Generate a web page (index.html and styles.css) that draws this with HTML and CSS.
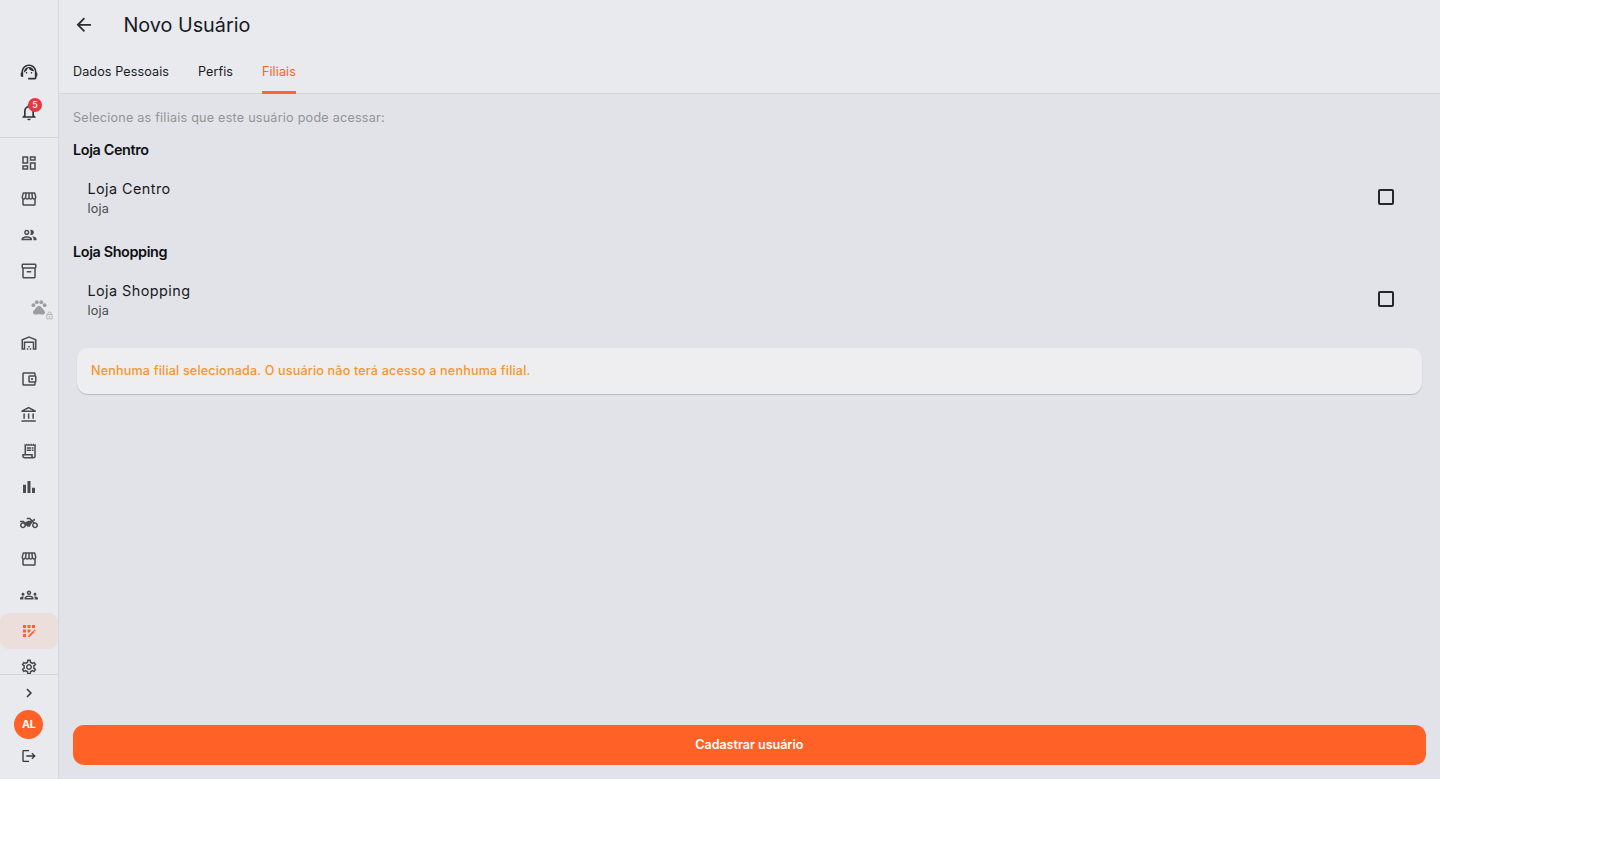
FILE: index.html
```html
<!DOCTYPE html>
<html lang="pt-BR">
<head>
    <meta charset="UTF-8">
    <meta name="viewport" content="width=device-width, initial-scale=1.0">
    <title>Novo Usuário</title>
    <link rel="stylesheet" href="styles.css">
</head>
<body>
    <div class="app">
        <aside class="sidebar">
            <div class="sidebar-top">
                <a class="top-item"><svg viewBox="0 0 24 24"><path d="M21 12.22C21 6.73 16.74 3 12 3c-4.69 0-9 3.65-9 9.28-.6.34-1 .98-1 1.72v2c0 1.1.9 2 2 2h1v-6.1c0-3.87 3.13-7 7-7s7 3.13 7 7V19h-8v2h8c1.1 0 2-.9 2-2v-1.22c.59-.31 1-.92 1-1.64v-2.3c0-.7-.41-1.31-1-1.62z"/><circle cx="9" cy="13" r="1"/><circle cx="15" cy="13" r="1"/><path d="M18 11.03C17.52 8.18 15.04 6 12.05 6c-3.03 0-6.29 2.51-6.03 6.45 2.47-1.01 4.33-3.21 4.86-5.89 1.31 2.63 4 4.44 7.12 4.47z"/></svg></a>
                <a class="top-item">
                    <svg viewBox="0 0 24 24"><path d="M12 22c1.1 0 2-.9 2-2h-4c0 1.1.9 2 2 2zm6-6v-5c0-3.07-1.63-5.64-4.5-6.32V4c0-.83-.67-1.5-1.5-1.5s-1.5.67-1.5 1.5v.68C7.64 5.36 6 7.92 6 11v5l-2 2v1h16v-1l-2-2zm-2 1H8v-6c0-2.48 1.51-4.5 4-4.5s4 2.02 4 4.5v6z"/></svg>
                    <span class="badge">5</span>
                </a>
            </div>

            <nav class="menu">
                <!-- Dashboard -->
                <a class="menu-item"><svg viewBox="0 0 24 24"><path d="M19 5v2h-4V5h4M9 5v6H5V5h4m10 8v6h-4v-6h4M9 17v2H5v-2h4M21 3h-8v6h8V3zM11 3H3v10h8V3zm10 8h-8v10h8V11zm-10 4H3v6h8v-6z"/></svg></a>
                <!-- Loja -->
                <a class="menu-item"><svg viewBox="0 0 24 24"><path id="storefront" d="M21.9 8.89l-1.05-4.37c-.22-.9-1-1.52-1.91-1.52H5.05c-.9 0-1.69.63-1.9 1.52L2.1 8.89c-.24 1.02-.02 2.06.62 2.88.08.11.19.19.28.29V19c0 1.1.9 2 2 2h14c1.1 0 2-.9 2-2v-6.94c.09-.09.2-.18.28-.28.64-.82.87-1.87.62-2.89zm-2.99-3.9l1.05 4.37c.1.42.01.84-.25 1.17-.14.18-.44.47-.94.47-.61 0-1.14-.49-1.21-1.14L16.98 5l1.93-.01zM13 5h1.96l.54 4.52c.05.39-.07.78-.33 1.07-.22.26-.54.41-.95.41-.67 0-1.22-.59-1.22-1.31V5zM8.49 9.52L9.04 5H11v4.69c0 .72-.55 1.31-1.29 1.31-.34 0-.65-.15-.89-.41-.25-.29-.37-.68-.33-1.07zm-4.45-.16L5.05 5h1.97l-.58 4.86c-.08.65-.6 1.14-1.21 1.14-.49 0-.8-.29-.93-.47-.27-.32-.36-.75-.26-1.17zM5 19v-6.03c.08.01.15.03.23.03.87 0 1.66-.36 2.24-.95.6.6 1.4.95 2.31.95.87 0 1.65-.36 2.23-.93.59.57 1.39.93 2.29.93.84 0 1.64-.35 2.24-.95.58.59 1.37.95 2.24.95.08 0 .15-.02.23-.03V19H5z"/></svg></a>
                <!-- Clientes -->
                <a class="menu-item"><svg viewBox="0 0 24 24"><path d="M9 13.75c-2.34 0-7 1.17-7 3.5V19h14v-1.75c0-2.33-4.66-3.5-7-3.5zM4.34 17c.84-.58 2.87-1.25 4.66-1.25s3.82.67 4.66 1.25H4.34zM9 12c1.93 0 3.5-1.57 3.5-3.5S10.93 5 9 5 5.5 6.57 5.5 8.5 7.07 12 9 12zm0-5c.83 0 1.5.67 1.5 1.5S9.83 10 9 10s-1.5-.67-1.5-1.5S8.17 7 9 7zm7.04 6.81c1.16.84 1.96 1.96 1.96 3.44V19h4v-1.75c0-2.02-3.5-3.17-5.96-3.44zM15 12c1.93 0 3.5-1.57 3.5-3.5S16.93 5 15 5c-.54 0-1.04.13-1.5.35.63.89 1 1.98 1 3.15s-.37 2.26-1 3.15c.46.22.96.35 1.5.35z"/></svg></a>
                <!-- Produtos -->
                <a class="menu-item"><svg viewBox="0 0 24 24"><path d="M20 2H4c-1 0-2 .9-2 2v3.01c0 .72.43 1.34 1 1.69V20c0 1.1 1.1 2 2 2h14c.9 0 2-.9 2-2V8.7c.57-.35 1-.97 1-1.69V4c0-1.1-1-2-2-2zm-1 18H5V9h14v11zm1-13H4V4h16v3z"/><path d="M9 12h6v2H9z"/></svg></a>
                <!-- Pets (bloqueado) -->
                <a class="menu-item locked">
                    <svg viewBox="0 0 24 24"><circle cx="4.5" cy="9.5" r="2.5"/><circle cx="9" cy="5.5" r="2.5"/><circle cx="15" cy="5.5" r="2.5"/><circle cx="19.5" cy="9.5" r="2.5"/><path d="M17.34 14.86c-.87-1.02-1.6-1.89-2.48-2.91-.46-.54-1.05-1.08-1.75-1.32-.11-.04-.22-.07-.33-.09-.25-.04-.52-.04-.78-.04s-.53 0-.79.05c-.11.02-.22.05-.33.09-.7.24-1.28.78-1.75 1.32-.87 1.02-1.6 1.89-2.48 2.91-1.31 1.31-2.92 2.76-2.62 4.79.29 1.02 1.02 2.03 2.33 2.32.73.15 3.06-.44 5.54-.44h.18c2.48 0 4.81.58 5.54.44 1.31-.29 2.04-1.31 2.33-2.32.31-2.04-1.3-3.49-2.61-4.8z"/></svg>
                    <svg class="lock" viewBox="0 0 24 24"><path d="M18 8h-1V6c0-2.76-2.24-5-5-5S7 3.24 7 6v2H6c-1.1 0-2 .9-2 2v10c0 1.1.9 2 2 2h12c1.1 0 2-.9 2-2V10c0-1.1-.9-2-2-2zM9 6c0-1.66 1.34-3 3-3s3 1.34 3 3v2H9V6zm9 14H6V10h12v10zm-6-3c1.1 0 2-.9 2-2s-.9-2-2-2-2 .9-2 2 .9 2 2 2z"/></svg>
                </a>
                <!-- Estoque -->
                <a class="menu-item"><svg viewBox="0 0 24 24"><path fill-rule="evenodd" d="M22 7v14h-5v-9H7v9H2V7l10-4 10 4zM4 19h1v-9h14v9h1V8.35l-8-3.2-8 3.2z"/><path d="M9 19h2v2H9zM11 16h2v2h-2zM13 19h2v2h-2z"/></svg></a>
                <!-- Caixa -->
                <a class="menu-item"><svg viewBox="0 0 24 24"><path d="M21 7.28V5c0-1.1-.9-2-2-2H5c-1.11 0-2 .9-2 2v14c0 1.1.89 2 2 2h14c1.1 0 2-.9 2-2v-2.28c.59-.35 1-.98 1-1.72V9c0-.74-.41-1.37-1-1.72zM20 9v6h-7V9h7zM5 19V5h14v2h-6c-1.1 0-2 .9-2 2v6c0 1.1.9 2 2 2h6v2H5z"/><circle cx="16" cy="12" r="1.5"/></svg></a>
                <!-- Financeiro -->
                <a class="menu-item"><svg viewBox="0 0 24 24"><path d="M6.5 10h-2v7h2v-7zm6 0h-2v7h2v-7zm8.5 9H2v2h19v-2zm-2.5-9h-2v7h2v-7zm-7-6.74L16.71 6H6.29l5.21-2.74m0-2.26L2 6v2h19V6l-9.5-5z"/></svg></a>
                <!-- Notas -->
                <a class="menu-item"><svg viewBox="0 0 24 24"><path d="M19.5 3.5L18 2l-1.5 1.5L15 2l-1.5 1.5L12 2l-1.5 1.5L9 2 7.5 3.5 6 2v14H3v3c0 1.66 1.34 3 3 3h12c1.66 0 3-1.34 3-3V2l-1.5 1.5zM15 20H6c-.55 0-1-.45-1-1v-1h10v2zm4-1c0 .55-.45 1-1 1s-1-.45-1-1v-3H8V5h11v14z"/><path d="M9 7h6v2H9zM16 7h2v2h-2zM9 10h6v2H9zM16 10h2v2h-2z"/></svg></a>
                <!-- Relatórios -->
                <a class="menu-item"><svg viewBox="0 0 24 24"><path d="M4 9h4v11H4zm12 4h4v7h-4zm-6-9h4v16h-4z"/></svg></a>
                <!-- Entregas -->
                <a class="menu-item"><svg viewBox="0 0 24 24"><path d="M20 11c-.18 0-.36.03-.53.05L17.41 9H20V6l-3.72 1.86L13.41 5H9v2h3.59l2 2H11l-4 2-2-2H0v2h4c-2.21 0-4 1.79-4 4s1.79 4 4 4 4-1.79 4-4l2 2h3l3.49-6.1 1.01 1.01C16.59 12.64 16 13.75 16 15c0 2.21 1.79 4 4 4s4-1.79 4-4-1.79-4-4-4zM4 17c-1.1 0-2-.9-2-2s.9-2 2-2 2 .9 2 2-.9 2-2 2zm16 0c-1.1 0-2-.9-2-2s.9-2 2-2 2 .9 2 2-.9 2-2 2z"/></svg></a>
                <!-- Filiais -->
                <a class="menu-item"><svg viewBox="0 0 24 24"><use href="#storefront"/></svg></a>
                <!-- Equipe -->
                <a class="menu-item"><svg viewBox="0 0 24 24"><path d="M4 13c1.1 0 2-.9 2-2s-.9-2-2-2-2 .9-2 2 .9 2 2 2zm1.13 1.1C4.76 14.04 4.39 14 4 14c-.99 0-1.93.21-2.78.58C.48 14.9 0 15.62 0 16.43V18h4.5v-1.61c0-.83.23-1.61.63-2.29zM20 13c1.1 0 2-.9 2-2s-.9-2-2-2-2 .9-2 2 .9 2 2 2zm4 3.43c0-.81-.48-1.53-1.22-1.85-.85-.37-1.79-.58-2.78-.58-.39 0-.76.04-1.13.1.4.68.63 1.46.63 2.29V18H24v-1.57zM16.24 13.65c-1.17-.52-2.61-.9-4.24-.9s-3.07.39-4.24.9C6.68 14.13 6 15.21 6 16.39V18h12v-1.61c0-1.18-.68-2.26-1.76-2.74zM8.07 16c.09-.23.13-.39.91-.69.97-.38 1.99-.56 3.02-.56s2.05.18 3.02.56c.77.3.81.46.91.69H8.07zM12 8c.55 0 1 .45 1 1s-.45 1-1 1-1-.45-1-1 .45-1 1-1m0-2c-1.66 0-3 1.34-3 3s1.34 3 3 3 3-1.34 3-3-1.34-3-3-3z"/></svg></a>
                <!-- Cadastros -->
                <a class="menu-item active"><svg viewBox="0 0 24 24"><path d="M10 4h4v4h-4zM4 16h4v4H4zM4 10h4v4H4zM4 4h4v4H4zM14 12.42V10h-4v4h2.42zM20.88 11.29l-1.17-1.17c-.16-.16-.42-.16-.58 0l-.88.88L20 12.75l.88-.88c.16-.16.16-.42 0-.58zM11 18.25V20h1.75l6.67-6.67-1.75-1.75zM16 4h4v4h-4z"/></svg></a>
                <!-- Configurações -->
                <a class="menu-item"><svg viewBox="0 0 24 24"><path d="M19.43 12.98c.04-.32.07-.64.07-.98s-.03-.66-.07-.98l2.11-1.65c.19-.15.24-.42.12-.64l-2-3.46c-.09-.16-.26-.25-.44-.25-.06 0-.12.01-.17.03l-2.49 1c-.52-.4-1.08-.73-1.69-.98l-.38-2.65C14.46 2.18 14.25 2 14 2h-4c-.25 0-.46.18-.49.42l-.38 2.65c-.61.25-1.17.59-1.69.98l-2.49-1c-.06-.02-.12-.03-.18-.03-.17 0-.34.09-.43.25l-2 3.46c-.13.22-.07.49.12.64l2.11 1.65c-.04.32-.07.65-.07.98s.03.66.07.98l-2.11 1.65c-.19.15-.24.42-.12.64l2 3.46c.09.16.26.25.44.25.06 0 .12-.01.17-.03l2.49-1c.52.4 1.08.73 1.69.98l.38 2.65c.03.24.24.42.49.42h4c.25 0 .46-.18.49-.42l.38-2.65c.61-.25 1.17-.59 1.69-.98l2.49 1c.06.02.12.03.18.03.17 0 .34-.09.43-.25l2-3.46c.12-.22.07-.49-.12-.64l-2.11-1.65zm-1.98-1.71c.04.31.05.52.05.73 0 .21-.02.43-.05.73l-.14 1.13.89.7 1.08.84-.7 1.21-1.27-.51-1.04-.42-.9.68c-.43.32-.84.56-1.25.73l-1.06.43-.16 1.13-.2 1.35h-1.4l-.19-1.35-.16-1.13-1.06-.43c-.43-.18-.83-.41-1.23-.71l-.91-.7-1.06.43-1.27.51-.7-1.21 1.08-.84.89-.7-.14-1.13c-.03-.31-.05-.54-.05-.74s.02-.43.05-.73l.14-1.13-.89-.7-1.08-.84.7-1.21 1.27.51 1.04.42.9-.68c.43-.32.84-.56 1.25-.73l1.06-.43.16-1.13.2-1.35h1.39l.19 1.35.16 1.13 1.06.43c.43.18.83.41 1.23.71l.91.7 1.06-.43 1.27-.51.7 1.21-1.07.85-.89.7.14 1.13zM12 8c-2.21 0-4 1.79-4 4s1.79 4 4 4 4-1.79 4-4-1.79-4-4-4zm0 6c-1.1 0-2-.9-2-2s.9-2 2-2 2 .9 2 2-.9 2-2 2z"/></svg></a>
            </nav>

            <div class="sidebar-bottom">
                <a class="expand"><svg viewBox="0 0 24 24"><path d="M10 6L8.59 7.41 13.17 12l-4.58 4.59L10 18l6-6z"/></svg></a>
                <div class="avatar">AL</div>
                <a class="logout"><svg viewBox="0 0 24 24"><path d="M17 7l-1.41 1.41L18.17 11H8v2h10.17l-2.58 2.58L17 17l5-5zM4 5h8V3H4c-1.1 0-2 .9-2 2v14c0 1.1.9 2 2 2h8v-2H4V5z"/></svg></a>
            </div>
        </aside>

        <main class="main">
            <header class="header">
                <div class="title-bar">
                    <svg class="back" viewBox="0 0 24 24"><path d="M20 11H7.83l5.59-5.59L12 4l-8 8 8 8 1.41-1.41L7.83 13H20v-2z"/></svg>
                    <h1>Novo Usuário</h1>
                </div>
                <div class="tabs">
                    <a class="tab">Dados Pessoais</a>
                    <a class="tab">Perfis</a>
                    <a class="tab active">Filiais</a>
                </div>
            </header>

            <div class="content">
                <p class="hint">Selecione as filiais que este usuário pode acessar:</p>

                <section class="group">
                    <h2>Loja Centro</h2>
                    <label class="branch">
                        <span class="branch-text">
                            <span class="branch-name">Loja Centro</span>
                            <span class="branch-type">loja</span>
                        </span>
                        <span class="checkbox"></span>
                    </label>
                </section>

                <section class="group">
                    <h2>Loja Shopping</h2>
                    <label class="branch">
                        <span class="branch-text">
                            <span class="branch-name">Loja Shopping</span>
                            <span class="branch-type">loja</span>
                        </span>
                        <span class="checkbox"></span>
                    </label>
                </section>

                <div class="warning">Nenhuma filial selecionada. O usuário não terá acesso a nenhuma filial.</div>
            </div>

            <div class="footer">
                <button class="submit">Cadastrar usuário</button>
            </div>
        </main>
    </div>
</body>
</html>
```
FILE: styles.css
```css
* {
    box-sizing: border-box;
}

body {
    margin: 0;
    background-color: #ffffff;
    font-family: Inter, 'Liberation Sans', sans-serif;
    color: #191a1f;
}

h1, h2, p {
    margin: 0;
}

svg {
    display: block;
    fill: currentColor;
}

.app {
    display: flex;
    width: 1440px;
    height: 779px;
    background-color: #e2e3e8;
    overflow: hidden;
}

/* Sidebar */
.sidebar {
    display: flex;
    flex-direction: column;
    width: 59px;
    flex-shrink: 0;
    background-color: #e8eaed;
    border-right: 1px solid #d5d7db;
}

.sidebar-top {
    height: 138px;
    padding-top: 52px;
    border-bottom: 1px solid #d3d5d9;
}

.top-item {
    position: relative;
    display: flex;
    align-items: center;
    justify-content: center;
    height: 40px;
    color: #2f3136;
}

.top-item svg {
    width: 20px;
    height: 20px;
}

.badge {
    position: absolute;
    top: 6px;
    left: 28px;
    width: 14px;
    height: 14px;
    border-radius: 50%;
    background-color: #e5393f;
    color: #ffffff;
    font-size: 9px;
    font-weight: 500;
    line-height: 14px;
    text-align: center;
}

.menu {
    height: 536px;
    padding-top: 7px;
    overflow: hidden;
}

.menu-item {
    display: flex;
    align-items: center;
    justify-content: center;
    width: 57.6px;
    height: 36px;
    border-radius: 9px;
    color: #494b50;
}

.menu-item svg {
    width: 18px;
    height: 18px;
}

.menu-item.active {
    background-color: #ecdeda;
    color: #ff6126;
}

.menu-item.locked {
    position: relative;
    padding-left: 21px;
    color: #9b9da1;
}

.menu-item .lock {
    position: absolute;
    left: 45px;
    top: 22px;
    width: 9px;
    height: 9px;
    color: #a4a6aa;
}

.sidebar-bottom {
    display: flex;
    flex-direction: column;
    align-items: center;
    flex: 1;
    width: 57.6px;
    padding-top: 9px;
    border-top: 1px solid #d3d5d9;
    color: #34363b;
}

.expand svg {
    width: 18px;
    height: 18px;
}

.avatar {
    width: 29px;
    height: 29px;
    margin: 8px 0 9px;
    border-radius: 50%;
    background-color: #ff6126;
    color: #ffffff;
    font-size: 10.8px;
    font-weight: 700;
    letter-spacing: -0.4px;
    line-height: 29px;
    text-align: center;
}

.logout svg {
    width: 16px;
    height: 16px;
}

/* Header */
.main {
    display: flex;
    flex-direction: column;
    flex: 1;
}

.header {
    height: 94px;
    background-color: #e8eaed;
    border-bottom: 1px solid #d3d5d9;
}

.title-bar {
    display: flex;
    align-items: center;
    height: 50px;
    padding-left: 14px;
}

.back {
    width: 21.6px;
    height: 21.6px;
    color: #2c2e33;
}

h1 {
    margin-left: 28.8px;
    font-size: 19.8px;
    font-weight: 400;
}

.tabs {
    display: flex;
    gap: 28.8px;
    height: 44px;
    padding-left: 14px;
}

.tab {
    font-size: 12.6px;
    letter-spacing: 0.1px;
    line-height: 43px;
}

.tab.active {
    color: #ff6126;
    border-bottom: 3px solid #f56a33;
}

/* Content */
.content {
    flex: 1;
    padding: 14px 14.5px 0 14px;
}

.hint {
    font-size: 12.6px;
    letter-spacing: 0.23px;
    line-height: 20px;
    color: #929397;
}

.group {
    height: 102px;
    padding-top: 12px;
}

h2 {
    color: #0e0f13;
    font-size: 14.4px;
    font-weight: 600;
    letter-spacing: -0.38px;
    line-height: 20px;
}

.branch {
    display: flex;
    align-items: center;
    justify-content: space-between;
    height: 56px;
    margin-top: 9px;
    padding: 0 31.5px 0 14.4px;
}

.branch-text {
    display: flex;
    flex-direction: column;
}

.branch-name {
    font-size: 14.4px;
    letter-spacing: 0.45px;
    line-height: 21px;
}

.branch-type {
    padding-top: 1px;
    margin-bottom: -1px;
    font-size: 12.6px;
    letter-spacing: 0.22px;
    line-height: 18px;
    color: #494b50;
}

.checkbox {
    width: 16px;
    height: 16px;
    border: 2px solid #26272c;
    border-radius: 2px;
}

.warning {
    height: 46px;
    margin: 16px 3.6px 0 4px;
    padding: 0 14px;
    border-radius: 11px;
    background-color: #eeeef0;
    box-shadow: 0 1px 1px #b9b9c9;
    color: #f7952a;
    font-size: 12.6px;
    font-weight: 500;
    letter-spacing: 0.17px;
    line-height: 46px;
}

.footer {
    padding: 0 14.5px 14.5px 14px;
}

.submit {
    display: block;
    width: 100%;
    height: 39.5px;
    border: none;
    border-radius: 11px;
    background-color: #ff6126;
    color: #ffffff;
    font-family: inherit;
    font-size: 12.6px;
    font-weight: 600;
    letter-spacing: -0.05px;
}
```
